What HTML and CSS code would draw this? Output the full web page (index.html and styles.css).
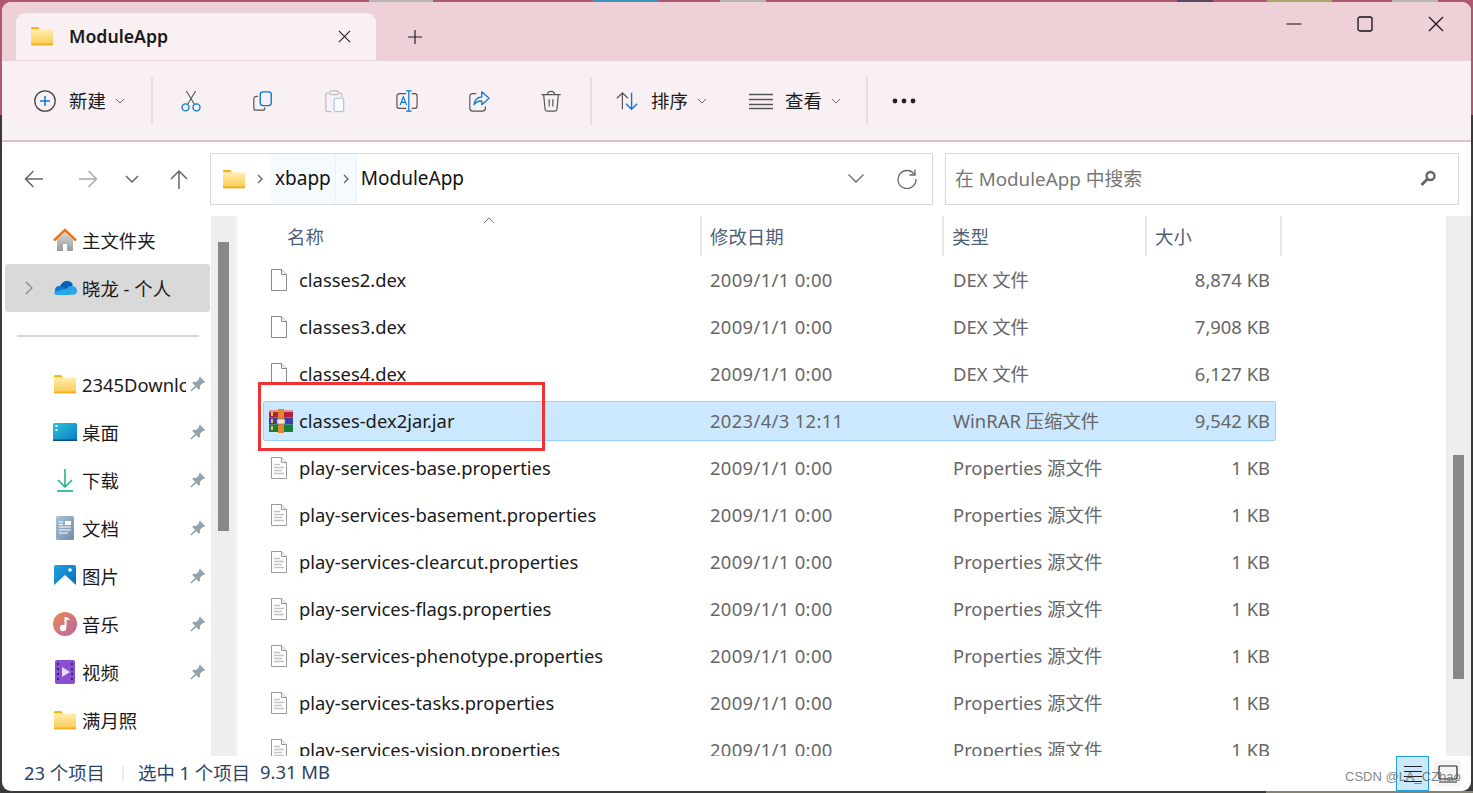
FILE: index.html
```html
<!DOCTYPE html>
<html lang="zh-CN">
<head>
<meta charset="utf-8">
<title>ModuleApp</title>
<link rel="stylesheet" href="styles.css">
</head>
<body>
<svg class="sprite" width="0" height="0">
  <defs>
    <linearGradient id="fold" x1="0" y1="0" x2="0" y2="1"><stop offset="0" stop-color="#ffeeb0"/><stop offset="1" stop-color="#fcc94e"/></linearGradient>
    <linearGradient id="sky" x1="0" y1="0" x2="1" y2="1"><stop offset="0" stop-color="#1fa0e0"/><stop offset="1" stop-color="#0a6cbc"/></linearGradient>
    <linearGradient id="desk" x1="0" y1="0" x2="1" y2="1"><stop offset="0" stop-color="#29c3d8"/><stop offset="1" stop-color="#0b7cc4"/></linearGradient>
    <linearGradient id="doc" x1="0" y1="0" x2="1" y2="1"><stop offset="0" stop-color="#aac2da"/><stop offset="1" stop-color="#6f8eab"/></linearGradient>
    <linearGradient id="mus" x1="0" y1="0" x2="1" y2="1"><stop offset="0" stop-color="#ee8a50"/><stop offset="1" stop-color="#b563a8"/></linearGradient>
    <linearGradient id="home" x1="0" y1="0" x2="0" y2="1"><stop offset="0" stop-color="#d8d8d8"/><stop offset="1" stop-color="#9a9a9a"/></linearGradient>
    <symbol id="folder" viewBox="0 0 24 20"><path d="M1 2.500C1 1.700 1.600 1 2.400 1H8l2.400 2.400H1z" fill="#f5b50f"/><path d="M1 3.600h22v14.600c0 .6-.4 1-1 1H2c-.6 0-1-.4-1-1z" fill="url(#fold)"/><path d="M1 17.600h22v.8c0 .5-.4.8-.9.8H1.900c-.5 0-.9-.3-.9-.8z" fill="#f2ae1c"/></symbol>
    <symbol id="file" viewBox="0 0 18 22"><path d="M1.500.5h10l5 5v16h-15z" fill="#fff" stroke="#8a8a8a"/><path d="M11.500.5v5h5" fill="#f2f2f2" stroke="#8a8a8a"/></symbol>
    <symbol id="txt" viewBox="0 0 18 22"><path d="M1.500.5h10l5 5v16h-15z" fill="#fff" stroke="#9a9a9a"/><path d="M11.500.5v5h5" fill="#f2f2f2" stroke="#9a9a9a"/><path d="M4 7.500h6M4 10.500h10M4 13.500h8M4 16.500h10" stroke="#c4c4c4" stroke-width="1.400"/></symbol>
    <symbol id="pin" viewBox="0 0 16 16"><path d="M10 .8 15.200 6l-1.300 1.100-1-.2-2.900 2.800.2 2.800-1.300 1.200-2.700-2.800L1.500 15.500.5 14.500l4.600-4.700-2.800-2.700 1.200-1.300 2.800.2 2.800-2.900-.2-1z" fill="#97a1ab"/></symbol>
    <symbol id="chev" viewBox="0 0 10 6"><path d="M1 1l4 4 4-4" fill="none" stroke="#6a6a6a" stroke-width="1"/></symbol>
  </defs>
</svg>

<div class="desktop-bit bit-a"></div>
<div class="desktop-bit bit-b"></div>
<div class="desktop-bit bit-c"></div>
<div class="desktop-bit bit-d"></div>
<div class="desktop-bit bit-e"></div>
<div class="desktop-bit bit-f"></div>
<div class="desktop-bit bit-g"></div>

<div class="window">
  <div class="tabbar">
    <div class="tab">
      <svg class="tab-folder"><use href="#folder"/></svg>
      <span class="tab-title">ModuleApp</span>
      <svg class="tab-close" viewBox="0 0 14 14"><path d="M1 1l12 12M13 1L1 13" stroke="#222" stroke-width="1.200"/></svg>
    </div>
    <svg class="tab-add" viewBox="0 0 16 16"><path d="M8 1v14M1 8h14" stroke="#222" stroke-width="1.200"/></svg>
    <div class="caption">
      <svg class="cap-btn" viewBox="0 0 16 16"><path d="M.5 8h15" stroke="#111" stroke-width="1.200"/></svg>
      <svg class="cap-btn" viewBox="0 0 16 16"><rect x="1" y="1" width="14" height="14" rx="2" fill="none" stroke="#111" stroke-width="1.300"/></svg>
      <svg class="cap-btn" viewBox="0 0 16 16"><path d="M1 1l14 14M15 1L1 15" stroke="#111" stroke-width="1.200"/></svg>
    </div>
  </div>

  <div class="toolbar">
    <div class="tool-new">
      <svg class="ico22" viewBox="0 0 22 22"><circle cx="11" cy="11" r="10.200" fill="none" stroke="#444" stroke-width="1.300"/><path d="M11 6v10M6 11h10" stroke="#0a78d4" stroke-width="1.500"/></svg>
      <span class="tool-label">新建</span>
      <svg class="chev"><use href="#chev"/></svg>
    </div>
    <div class="sep sep-first"></div>
    <div class="tool-icon">
      <svg class="ico24" viewBox="0 0 24 24"><path d="M7 1l9 15M17 1L8 16" stroke="#555" stroke-width="1.200" fill="none"/><circle cx="6" cy="19" r="3.800" fill="none" stroke="#0a78d4" stroke-width="1.500"/><circle cx="18" cy="19" r="3.800" fill="none" stroke="#0a78d4" stroke-width="1.500"/></svg>
    </div>
    <div class="tool-icon">
      <svg class="ico24" viewBox="0 0 24 24"><path d="M6.500 7H4.500C3 7 2 8 2 9.500v10C2 21 3 22 4.500 22h7c1.500 0 2.500-1 2.500-2.500V19" fill="none" stroke="#555" stroke-width="1.300"/><rect x="9" y="2" width="12" height="15" rx="3" fill="#f9f0f3" stroke="#0a78d4" stroke-width="1.500"/></svg>
    </div>
    <div class="tool-icon">
      <svg class="ico24" viewBox="0 0 24 24"><path d="M6 3.500H3.500C2.500 3.500 2 4 2 5v17c0 1 .5 1.500 1.500 1.500H8M16 3.500h2c1 0 1.500.5 1.500 1.500v3" fill="none" stroke="#bdbdbd" stroke-width="1.300"/><rect x="6.500" y="1" width="9" height="4" rx="1" fill="none" stroke="#bdbdbd" stroke-width="1.200"/><rect x="11" y="9" width="10.500" height="14.500" rx="2" fill="#fdfdfe" stroke="#9cc6ea" stroke-width="1.300"/></svg>
    </div>
    <div class="tool-icon">
      <svg class="ico24" viewBox="0 0 24 24"><path d="M11 4H3.500C2 4 1 5 1 6.500v11C1 19 2 20 3.500 20H11M17 4h3.500C22 4 23 5 23 6.500v11c0 1.500-1 2.500-2.500 2.500H17" fill="none" stroke="#555" stroke-width="1.300"/><path d="M11 1h6M11 23h6M14 1v22" stroke="#0a78d4" stroke-width="1.400" fill="none"/><path d="M4.500 16.500 8 7.500l3.500 9M5.800 13.500h4.500" stroke="#0a78d4" stroke-width="1.300" fill="none"/></svg>
    </div>
    <div class="tool-icon">
      <svg class="ico24" viewBox="0 0 24 24"><path d="M9 4H5C3 4 2 5 2 7v13c0 2 1 3 3 3h11c2 0 3-1 3-3v-2" fill="none" stroke="#555" stroke-width="1.300"/><path d="M15 2l8 7-8 7v-4c-4 0-6.500 1-8.500 4 .5-5 3.500-8 8.500-8.500z" fill="none" stroke="#0a78d4" stroke-width="1.400" stroke-linejoin="round"/></svg>
    </div>
    <div class="tool-icon">
      <svg class="ico24" viewBox="0 0 24 24"><path d="M1.500 5h21M8 5c0-2 1.500-3.500 4-3.500S16 3 16 5M4 5l1.500 16c.1 1.200 1 2 2.200 2h8.600c1.200 0 2.100-.8 2.200-2L20 5M10 10v8M14 10v8" fill="none" stroke="#555" stroke-width="1.300"/></svg>
    </div>
    <div class="sep sep-mid"></div>
    <div class="tool-sort">
      <svg class="ico24" viewBox="0 0 24 24"><path d="M7 21V3M1 9l6-6 6 6" fill="none" stroke="#555" stroke-width="1.300"/><path d="M17 3v18M11 15l6 6 6-6" fill="none" stroke="#0a78d4" stroke-width="1.500"/></svg>
      <span class="tool-label">排序</span>
      <svg class="chev"><use href="#chev"/></svg>
    </div>
    <div class="tool-view">
      <svg class="ico-view" viewBox="0 0 24 24"><path d="M0 5.500h24M0 10.500h24M0 15.500h24M0 19.500h24" stroke="#555" stroke-width="1.300"/></svg>
      <span class="tool-label label-view">查看</span>
      <svg class="chev"><use href="#chev"/></svg>
    </div>
    <div class="sep"></div>
    <svg class="more" viewBox="0 0 24 6"><circle cx="3" cy="3" r="2.400" fill="#222"/><circle cx="12" cy="3" r="2.400" fill="#222"/><circle cx="21" cy="3" r="2.400" fill="#222"/></svg>
  </div>

  <div class="addressrow">
    <div class="navbtns">
      <svg class="nb" viewBox="0 0 20 20"><path d="M19 10H1.500M9.500 2l-8 8 8 8" fill="none" stroke="#666" stroke-width="1.500"/></svg>
      <svg class="nb nb-off" viewBox="0 0 20 20"><path d="M1 10h17.500M10.500 2l8 8-8 8" fill="none" stroke="#aaa" stroke-width="1.500"/></svg>
      <svg class="nb nb-small" viewBox="0 0 14 8"><path d="M1 1l6 6 6-6" fill="none" stroke="#666" stroke-width="1.500"/></svg>
      <svg class="nb" viewBox="0 0 20 20"><path d="M10 20V2M2 10l8-8 8 8" fill="none" stroke="#666" stroke-width="1.500"/></svg>
    </div>
    <div class="addressbox">
      <svg class="addr-folder"><use href="#folder"/></svg>
      <svg class="crumb-sep" viewBox="0 0 6 10"><path d="M1 1l4 4-4 4" fill="none" stroke="#666" stroke-width="1.400"/></svg>
      <span class="crumb crumb-hover">xbapp</span>
      <span class="crumb-arrow"><svg class="crumb-sep-inner" viewBox="0 0 6 10"><path d="M1 1l4 4-4 4" fill="none" stroke="#666" stroke-width="1.400"/></svg></span>
      <span class="crumb crumb-last">ModuleApp</span>
      <svg class="addr-drop" viewBox="0 0 16 9"><path d="M.5.500l7.500 7.500L15.500.500" fill="none" stroke="#666" stroke-width="1.300"/></svg>
      <svg class="addr-refresh" viewBox="0 0 20 20"><path d="M17.500 5.500A9 9 0 1 0 19 10" fill="none" stroke="#666" stroke-width="1.300"/><path d="M18 .5v5.500h-5.500" fill="none" stroke="#666" stroke-width="1.300"/></svg>
    </div>
    <div class="searchbox">
      <span class="search-text">在 ModuleApp 中搜索</span>
      <svg class="search-ico" viewBox="0 0 17 17"><circle cx="10.500" cy="6" r="4" fill="none" stroke="#666" stroke-width="2.400"/><path d="M7.500 9 1.500 15" stroke="#666" stroke-width="2.800"/></svg>
    </div>
  </div>

  <div class="body">
    <aside class="nav">
      <div class="nav-item">
        <span></span>
        <svg class="nav-ico" viewBox="0 0 24 24"><path d="M4 12v10c0 .6.400 1 1 1h5v-7h4v7h5c.6 0 1-.4 1-1V12L12 4z" fill="url(#home)"/><path d="M1 12.500 12 2l11 10.500" fill="none" stroke="#e8771a" stroke-width="2.600"/></svg>
        <span class="nav-text">主文件夹</span>
      </div>
      <div class="nav-item nav-selected">
        <svg class="nav-chev" viewBox="0 0 8 14"><path d="M1 1l6 6-6 6" fill="none" stroke="#888" stroke-width="1.300"/></svg>
        <svg class="nav-ico" viewBox="0 0 24 16"><path d="M7 6.500C8 3 11 1 14 1c3 0 5 1.500 6 4L13 10z" fill="#0a5fb8"/><path d="M2 10c0-2.500 2-4.500 5-4 2 0 4 1 5 3l4 5H4c-1.500-.5-2-2-2-4z" fill="#0f78d4"/><path d="M13 14.800H20c2.500 0 4-1.500 4-4 0-2.500-2-4.800-5-4.800-3 0-4.500 1.500-6 3L8 14.800z" fill="#29a6ea"/><path d="M1 12c0 1.800 1.300 3 3 3h13L12 9z" fill="#29a6ea"/></svg>
        <span class="nav-text">晓龙 - 个人</span>
      </div>
      <div class="nav-divider"></div>
      <div class="nav-item">
        <span></span><svg class="nav-ico"><use href="#folder"/></svg>
        <span class="nav-text nav-latin">2345Downloads</span>
        <svg class="pin"><use href="#pin"/></svg>
      </div>
      <div class="nav-item">
        <span></span>
        <svg class="nav-ico" viewBox="0 0 24 18"><rect y="0" width="24" height="18" rx="1.500" fill="url(#desk)"/><rect x="2.500" y="2" width="2" height="2" fill="#fff"/><rect x="2.500" y="6" width="2" height="2" fill="#fff"/><rect y="16.500" width="24" height="1.500" fill="#0a4f8c"/></svg>
        <span class="nav-text">桌面</span>
        <svg class="pin"><use href="#pin"/></svg>
      </div>
      <div class="nav-item">
        <span></span>
        <svg class="nav-ico" viewBox="0 0 24 24"><path d="M12 1v18M5 12l7 7 7-7" fill="none" stroke="#17b08a" stroke-width="1.500"/><path d="M4 23h16" stroke="#17b08a" stroke-width="1.600"/></svg>
        <span class="nav-text">下载</span>
        <svg class="pin"><use href="#pin"/></svg>
      </div>
      <div class="nav-item">
        <span></span>
        <svg class="nav-ico" viewBox="0 0 24 24"><rect x="3" y="0" width="18" height="24" rx="1.500" fill="url(#doc)"/><path d="M6 11h12M6 14h12M6 17h9" stroke="#fff" stroke-width="1"/><rect x="12" y="5" width="6" height="4" fill="#fff"/><path d="M6 6h4M6 8.500h4" stroke="#fff" stroke-width="1"/></svg>
        <span class="nav-text">文档</span>
        <svg class="pin"><use href="#pin"/></svg>
      </div>
      <div class="nav-item">
        <span></span>
        <svg class="nav-ico" viewBox="0 0 24 24"><rect x="1" y="1" width="22" height="22" rx="2" fill="url(#sky)"/><path d="M1 21l11-10 11 10v.5c0 1-.5 1.500-1.500 1.500h-19C1.500 23 1 22.500 1 21.500z" fill="#fff"/><circle cx="17" cy="6" r="1.800" fill="#fff"/></svg>
        <span class="nav-text">图片</span>
        <svg class="pin"><use href="#pin"/></svg>
      </div>
      <div class="nav-item">
        <span></span>
        <svg class="nav-ico" viewBox="0 0 24 24"><circle cx="12" cy="12" r="12" fill="url(#mus)"/><path d="M12.500 5v10" stroke="#fff" stroke-width="2"/><circle cx="10" cy="16" r="3.200" fill="#fff"/><path d="M12.500 5c2 0 4 1 4 3.500-1.500-1-3-1-4-1z" fill="#fff"/></svg>
        <span class="nav-text">音乐</span>
        <svg class="pin"><use href="#pin"/></svg>
      </div>
      <div class="nav-item">
        <span></span>
        <svg class="nav-ico" viewBox="0 0 24 24"><rect x="2" y="0" width="20" height="24" rx="2" fill="#8a4fd0"/><path d="M4 3h2v2H4zM4 8h2v2H4zM4 13h2v2H4zM4 18h2v2H4zM18 3h2v2h-2zM18 8h2v2h-2zM18 13h2v2h-2zM18 18h2v2h-2z" fill="#3a2080"/><path d="M9 7l8 5-8 5z" fill="#eadcff"/></svg>
        <span class="nav-text">视频</span>
        <svg class="pin"><use href="#pin"/></svg>
      </div>
      <div class="nav-item">
        <span></span><svg class="nav-ico"><use href="#folder"/></svg>
        <span class="nav-text">满月照</span>
      </div>
    </aside>
    <div class="nav-scroll"><div class="nav-thumb"></div></div>
    <div class="splitter"></div>
    <main class="pane">
      <div class="head">
        <div class="hcol hcol-name">名称<svg class="sort-up" viewBox="0 0 12 7"><path d="M1 6l5-5 5 5" fill="none" stroke="#777" stroke-width="1"/></svg></div>
        <div class="hcol hcol-date">修改日期</div>
        <div class="hcol hcol-type">类型</div>
        <div class="hcol hcol-size">大小</div>
      </div>
      <div class="rows">
        <div class="row"><svg class="ficon"><use href="#file"/></svg><span class="fname">classes2.dex</span><span class="cell date">2009/1/1 0:00</span><span class="cell type">DEX 文件</span><span class="cell size">8,874 KB</span></div>
        <div class="row"><svg class="ficon"><use href="#file"/></svg><span class="fname">classes3.dex</span><span class="cell date">2009/1/1 0:00</span><span class="cell type">DEX 文件</span><span class="cell size">7,908 KB</span></div>
        <div class="row"><svg class="ficon"><use href="#file"/></svg><span class="fname">classes4.dex</span><span class="cell date">2009/1/1 0:00</span><span class="cell type">DEX 文件</span><span class="cell size">6,127 KB</span></div>
        <div class="row row-selected">
          <svg class="ficon ficon-rar" viewBox="0 0 24 24"><rect x="0" y="1" width="24" height="7.500" fill="#b3203f"/><rect x="0" y="8.500" width="24" height="7" fill="#3d3fa8"/><rect x="0" y="15.500" width="24" height="7.500" fill="#1a7d3c"/><rect x="0" y="1" width="24" height="2" fill="#e88aa0"/><rect x="2" y="3" width="2" height="4" fill="#f2c033"/><rect x="2" y="10" width="2" height="4" fill="#f2c033"/><rect x="2" y="17" width="2" height="4" fill="#f2c033"/><rect x="9" y="0" width="6" height="24" fill="#e0892a"/><rect x="8" y="10" width="8" height="5" fill="#e8e8e8" stroke="#666" stroke-width=".6"/></svg>
          <span class="fname">classes-dex2jar.jar</span><span class="cell date">2023/4/3 12:11</span><span class="cell type">WinRAR 压缩文件</span><span class="cell size">9,542 KB</span>
        </div>
        <div class="row"><svg class="ficon"><use href="#txt"/></svg><span class="fname">play-services-base.properties</span><span class="cell date">2009/1/1 0:00</span><span class="cell type">Properties 源文件</span><span class="cell size">1 KB</span></div>
        <div class="row"><svg class="ficon"><use href="#txt"/></svg><span class="fname">play-services-basement.properties</span><span class="cell date">2009/1/1 0:00</span><span class="cell type">Properties 源文件</span><span class="cell size">1 KB</span></div>
        <div class="row"><svg class="ficon"><use href="#txt"/></svg><span class="fname">play-services-clearcut.properties</span><span class="cell date">2009/1/1 0:00</span><span class="cell type">Properties 源文件</span><span class="cell size">1 KB</span></div>
        <div class="row"><svg class="ficon"><use href="#txt"/></svg><span class="fname">play-services-flags.properties</span><span class="cell date">2009/1/1 0:00</span><span class="cell type">Properties 源文件</span><span class="cell size">1 KB</span></div>
        <div class="row"><svg class="ficon"><use href="#txt"/></svg><span class="fname">play-services-phenotype.properties</span><span class="cell date">2009/1/1 0:00</span><span class="cell type">Properties 源文件</span><span class="cell size">1 KB</span></div>
        <div class="row"><svg class="ficon"><use href="#txt"/></svg><span class="fname">play-services-tasks.properties</span><span class="cell date">2009/1/1 0:00</span><span class="cell type">Properties 源文件</span><span class="cell size">1 KB</span></div>
        <div class="row"><svg class="ficon"><use href="#txt"/></svg><span class="fname">play-services-vision.properties</span><span class="cell date">2009/1/1 0:00</span><span class="cell type">Properties 源文件</span><span class="cell size">1 KB</span></div>
      </div>
    </main>
    <div class="main-scroll"><div class="main-thumb"></div></div>
  </div>

  <div class="status">
    <span class="st-count">23 个项目</span>
    <span class="st-sep"></span>
    <span class="st-sel">选中 1 个项目</span>
    <span class="st-size">9.31 MB</span>
    <div class="view-btns">
      <div class="vb vb-on"><svg class="vb-ico" viewBox="0 0 20 20"><path d="M1 2.500h18M1 7.500h18M1 12.500h18M1 17.500h18" stroke="#222" stroke-width="1.100"/></svg></div>
      <div class="vb"><svg class="vb-ico" viewBox="0 0 20 20"><rect x="1" y="2" width="18" height="13" rx="1" fill="none" stroke="#222" stroke-width="1.200"/><path d="M1 18h18" stroke="#222" stroke-width="1.200"/></svg></div>
    </div>
  </div>
</div>

<div class="annot"></div>
<div class="wm">CSDN @LA_CZhao</div>
</body>
</html>
```
FILE: styles.css
```css
* { box-sizing: border-box; }
html, body { margin: 0; height: 100%; overflow: hidden; }
body {
  background: linear-gradient(to bottom, #ad5a70 0, #ad5a70 115px, #3a3a3c 115px, #3a3a3c 100%);
  padding: 2px;
  font-family: "Noto Sans", "Noto Sans CJK SC", sans-serif;
  font-size: 18.4px;
  color: #1a1a1a;
}
.sprite { position: absolute; }
.desktop-bit { position: absolute; top: 0; height: 2px; }
.bit-a { left: 369px; width: 64px; background: #b8b4b4; }
.bit-b { left: 593px; width: 65px; background: #3f94bd; }
.bit-c { left: 720px; width: 46px; background: #b9b2b2; }
.bit-d { left: 1177px; width: 36px; background: #5e4660; }
.bit-e { left: 1267px; width: 65px; background: #a9a868; }
.bit-f { left: 1392px; width: 46px; background: #bdb8b8; }
.bit-g { top: auto; bottom: 0; left: 1266px; right: 0; background: #8a8270; }

.window {
  height: 789px;
  display: flex;
  flex-direction: column;
  border-radius: 9px;
  overflow: hidden;
  background: #fff;
  position: relative;
}

/* Tabs */
.tabbar { height: 58px; background: #edd1d7; display: flex; align-items: flex-end; padding-left: 14px; flex: none; }
.tab {
  width: 360px; height: 47px; background: #f9f0f3; border-radius: 9px 9px 0 0;
  display: flex; align-items: center; padding: 0 0 1px 14px;
  box-shadow: 0 0 0 1px #e6cfd5;
}
.tab-folder { width: 24px; height: 20px; flex: none; }
.tab-title { font-size: 17.7px; font-weight: 600; margin-left: 15px; flex: 1; }
.tab-close { width: 13px; height: 13px; margin-right: 25px; }
.tab-add { width: 16px; height: 16px; margin: 0 0 15px 31px; }
.caption { margin-left: auto; display: flex; align-self: flex-start; margin-top: 14px; margin-right: 27px; gap: 55px; }
.cap-btn { width: 16px; height: 16px; }

/* Toolbar */
.toolbar {
  height: 82px; background: #f9f0f3; border-top: 1px solid #e6cfd5; border-bottom: 2px solid #dcc0c8;
  display: flex; align-items: center; flex: none; padding-left: 32px;
}
.tool-new, .tool-sort, .tool-view { display: flex; align-items: center; }
.ico22 { width: 22px; height: 22px; flex: none; }
.ico24 { width: 22px; height: 24px; flex: none; }
.ico-view { width: 24px; height: 24px; flex: none; }
.tool-label { margin-left: 13px; padding-bottom: 2px; }
.label-view { margin-left: 12px; }
.chev { width: 10px; height: 6px; margin-left: 9px; }
.tool-new { width: 117px; }
.sep { width: 2px; height: 48px; background: #e4dfe1; flex: none; }
.sep-first { margin-right: 2px; }
.sep-mid { margin-left: 3px; }
.tool-icon { width: 72px; flex: none; display: flex; justify-content: center; }
.tool-sort { margin-left: 24px; width: 108px; }
.tool-view { margin-left: 25px; width: 117px; }
.more { width: 26px; height: 6px; margin-left: 23px; }

/* Address row */
.addressrow { height: 74px; flex: none; display: flex; align-items: center; padding-bottom: 1px; }
.navbtns { width: 208px; flex: none; display: flex; align-items: center; padding-left: 22px; }
.nb { width: 20px; height: 20px; flex: none; margin-right: 34px; }
.nb-small { width: 14px; height: 8px; margin-right: 31px; }
.nb:last-child { margin-right: 0; margin-left: -1px; }
.nb-off { margin-right: 27px; }
.addressbox {
  width: 723px; height: 52px; border: 1px solid #d9d9d9; background: #fff;
  display: flex; align-items: center; padding-left: 11px;
}
.addr-folder { width: 24px; height: 20px; flex: none; }
.crumb-sep { width: 6px; height: 10px; margin: 0 11px; flex: none; }
.crumb { font-size: 19px; color: #111; }
.crumb-hover { background: #f5fafe; margin-left: -3px; padding: 0 4px; height: 50px; line-height: 49px; }
.crumb-arrow { background: #f5fafe; width: 22px; height: 50px; display: flex; align-items: center; justify-content: center; border-left: 1px solid #e8f2fa; border-right: 1px solid #e8f2fa; flex: none; }
.crumb-sep-inner { width: 6px; height: 10px; }
.crumb-last { margin-left: 4px; padding-bottom: 1px; }
.addr-drop { width: 16px; height: 9px; margin-left: auto; }
.addr-refresh { width: 20px; height: 20px; margin: 0 15px 0 33px; }
.searchbox {
  width: 514px; height: 52px; margin-left: 12px; border: 1px solid #d9d9d9;
  display: flex; align-items: center; padding: 0 21px 0 9px;
}
.search-text { color: #777; flex: 1; padding-bottom: 2px; font-size: 18.8px; }
.search-ico { width: 17px; height: 17px; }

/* Body */
.body { height: 540px; display: flex; flex: none; }
.nav { width: 209px; flex: none; padding-left: 3px; overflow: hidden; }
.nav-item {
  width: 205px; height: 48px; display: grid;
  grid-template-columns: 48px 29px 104px 24px; align-items: center;
}
.nav-selected { background: #d9d9d9; border-radius: 3px; }
.nav-chev { width: 8px; height: 14px; justify-self: center; }
.nav-ico { width: 24px; height: 24px; }
.nav-text { white-space: nowrap; overflow: hidden; padding-bottom: 1px; }
.nav-latin { padding-bottom: 0; }
.pin { width: 16px; height: 16px; justify-self: center; }
.nav-divider { height: 48px; display: flex; align-items: center; padding: 0 11px 0 12px; }
.nav-divider::before { content: ""; width: 182px; height: 2px; background: #d6d6d6; }

.nav-scroll { width: 25px; flex: none; background: #eee; padding: 26px 7px 0; }
.nav-thumb { height: 289px; background: #888; }
.splitter { width: 2px; background: #f6f6f6; flex: none; }
.pane { width: 1208px; flex: none; overflow: hidden; padding-left: 1px; }
.head { height: 40px; display: flex; color: #4f6075; }
.hcol { height: 40px; border-right: 2px solid #e8e8e8; display: flex; align-items: center; position: relative; flex: none; padding-bottom: 1px; }
.hcol-name { width: 463px; padding-left: 48px; }
.hcol-date { width: 242px; padding-left: 8px; }
.hcol-type { width: 203px; padding-left: 8px; }
.hcol-size { width: 135px; padding-left: 8px; }
.sort-up { position: absolute; left: 244px; top: 1px; width: 12px; height: 7px; }
.rows { height: 500px; overflow: hidden; padding: 4px 0 0 24px; display: flex; flex-direction: column; gap: 7px; }
.row {
  flex: none; width: 1013px; height: 40px; display: grid;
  grid-template-columns: 437px 243px 203px 128px; align-items: center; position: relative;
  border: 1px solid transparent; border-radius: 2px;
}
.row-selected { background: #cce8ff; border-color: #99d1ff; }
.ficon { position: absolute; left: 6px; top: 8px; width: 18px; height: 22px; }
.ficon-rar { left: 5px; top: 7px; width: 24px; height: 24px; }
.fname { padding: 0 0 2px 35px; white-space: nowrap; color: #1a1a1a; }
.cell { padding: 0 0 2px 9px; color: #666; white-space: nowrap; }
.date { letter-spacing: .35px; }
.size { text-align: right; padding: 0 5px 2px 0; }
.main-scroll { width: 25px; flex: none; background: #eee; padding: 239px 7px 0; }
.main-thumb { height: 224px; background: #888; }

/* Status */
.status { height: 35px; flex: none; display: flex; align-items: center; padding-left: 22px; color: #2b4464; }
.st-count { width: 98px; padding-bottom: 4px; }
.st-sep { width: 2px; height: 16px; background: #eee; flex: none; }
.st-sel { margin-left: 14px; padding-bottom: 4px; }
.st-size { margin-left: 10px; padding-bottom: 4px; }
.view-btns { margin-left: auto; display: flex; margin-right: 10px; gap: 5px; height: 35px; align-items: center; }
.vb { width: 27px; height: 27px; display: flex; align-items: center; justify-content: center; background: #f5f5f5; border-radius: 3px; }
.vb-on { width: 33px; height: 35px; background: #cde8fa; border: 1px solid #1ba1e2; border-radius: 0; }
.vb-ico { width: 20px; height: 20px; }

/* Annotation overlay */
.annot { position: absolute; left: 258px; top: 382px; width: 287px; height: 69px; border: 3px solid #f23232; pointer-events: none; }
.wm { position: absolute; left: 1345px; top: 769px; font-family: "Liberation Sans", sans-serif; font-size: 13px; color: rgba(90,90,90,.75); white-space: nowrap; }
```
